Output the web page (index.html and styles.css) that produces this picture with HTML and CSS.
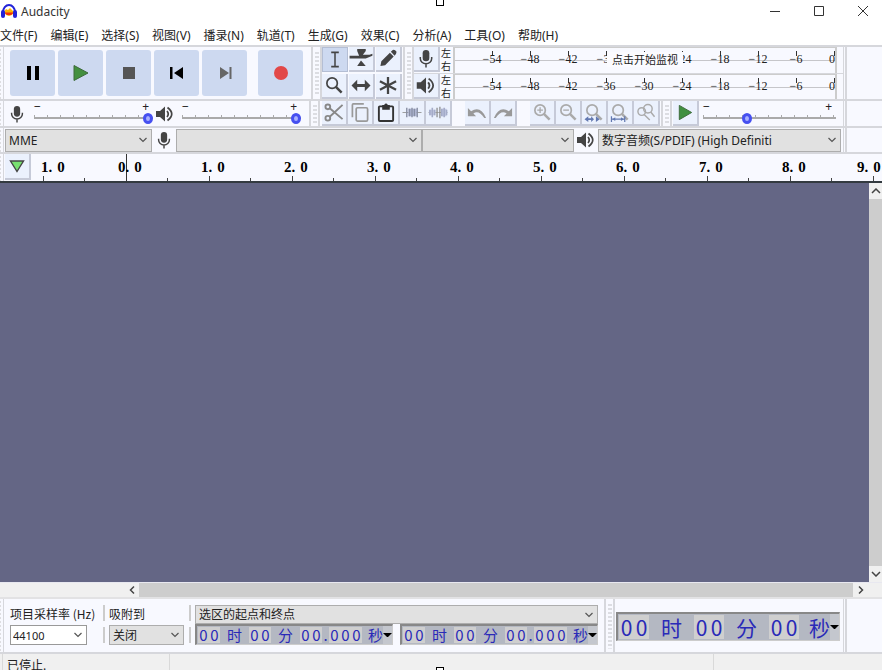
FILE: index.html
```
<!DOCTYPE html>
<html lang="zh-CN">
<head>
    <meta charset="UTF-8">
    <meta name="viewport" content="width=device-width, initial-scale=1.0">
    <title>Audacity</title>
    <link rel="stylesheet" href="styles.css">
</head>
<body>
<!-- Shared icons -->
<svg class="sprite" aria-hidden="true">
    <symbol id="mic" viewBox="0 0 18 20">
        <rect x="5.500" y="1" width="7" height="12" rx="3.500" fill="#444"/>
        <path d="M3 8.500v1.500a6 5.500 0 0 0 12 0v-1.500M9 15.500v4" fill="none" stroke="#444" stroke-width="1.600"/>
    </symbol>
    <symbol id="speaker" viewBox="0 0 18 18">
        <path d="M0 6h4l5-4.500v15L4 12H0z" fill="#444"/>
        <path d="M11 6q2.500 3 0 6M11.500 2.500q8.500 6.500 0 13" fill="none" stroke="#444" stroke-width="1.700"/>
    </symbol>
    <symbol id="lens" viewBox="0 0 20 20">
        <circle cx="8" cy="7.500" r="5.500" fill="none" stroke="currentColor" stroke-width="1.800"/>
        <path d="M12 11.500l6 6" stroke="currentColor" stroke-width="2.600"/>
    </symbol>
    <symbol id="chevron" viewBox="0 0 10 6">
        <path d="M1.500 1l3.500 3.500L8.500 1" fill="none" stroke="#555" stroke-width="1.200"/>
    </symbol>
    <symbol id="undo-arrow" viewBox="0 0 22 16">
        <path d="M1 3v9h9L7 9q6-4 12 5h2Q15 0 4.500 6.500z" fill="#999"/>
    </symbol>
</svg>

<header class="titlebar">
    <svg class="logo" viewBox="0 0 18 18">
        <path d="M3 10a6 7 0 0 1 12 0" fill="#fff" stroke="#2323d8" stroke-width="2"/>
        <path d="M4 10l2-3 2 1 2-2 2 2 2 2-2 3-3 1-3-1z" fill="#ffb400"/>
        <path d="M4 10.500h10l-3 2.500H7z" fill="#f03010"/>
        <rect x="1" y="8" width="4" height="8" rx="2" fill="#2323d8"/>
        <rect x="13" y="8" width="4" height="8" rx="2" fill="#2323d8"/>
    </svg>
    <span class="title">Audacity</span>
    <div class="window-buttons">
        <button aria-label="最小化"><svg viewBox="0 0 12 12"><path d="M1 6.500h10"/></svg></button>
        <button aria-label="最大化"><svg viewBox="0 0 12 12"><path d="M1.500 1.500h9v9h-9z"/></svg></button>
        <button aria-label="关闭"><svg viewBox="0 0 12 12"><path d="M1 1l10 10M11 1L1 11"/></svg></button>
    </div>
</header>

<nav class="menu">
    <a href="#">文件(F)</a>
    <a href="#">编辑(E)</a>
    <a href="#">选择(S)</a>
    <a href="#">视图(V)</a>
    <a href="#">播录(N)</a>
    <a href="#">轨道(T)</a>
    <a href="#">生成(G)</a>
    <a href="#">效果(C)</a>
    <a href="#">分析(A)</a>
    <a href="#">工具(O)</a>
    <a href="#">帮助(H)</a>
</nav>

<div class="dock">
    <div class="dock-row dock-main">
        <div class="edge-grip"></div>
        <div class="transport">
            <button aria-label="暂停"><svg viewBox="0 0 20 20"><path d="M4 3h4v14H4zM12 3h4v14h-4z" fill="#000"/></svg></button>
            <button aria-label="播放"><svg viewBox="0 0 20 20"><path d="M3 2.500v15l14-7.500z" fill="#43903f" stroke="#3c6a3a"/></svg></button>
            <button aria-label="停止"><svg viewBox="0 0 20 20"><path d="M4 4h12v12H4z" fill="#555"/></svg></button>
            <button aria-label="跳至开头"><svg viewBox="0 0 20 20"><path d="M3 4h2.500v12H3zM16 4v12l-9-6z" fill="#000"/></svg></button>
            <button aria-label="跳至末尾"><svg viewBox="0 0 20 20"><path d="M14.500 4h2v12h-2zM5 4v12l9-6z" fill="#666"/></svg></button>
            <button class="record" aria-label="录制"><svg viewBox="0 0 20 20"><circle cx="10" cy="10" r="7" fill="#e24848"/></svg></button>
        </div>
        <div class="grip"></div>
        <div class="tools">
            <button class="tool active" aria-label="选择工具"><svg viewBox="0 0 20 20"><path d="M6 2.500h8M6 17.500h8M10 2.500v15" fill="none" stroke="#444" stroke-width="1.600"/></svg></button>
            <button class="tool wide" aria-label="包络工具"><svg viewBox="0 0 24 20"><path d="M8 0h9v2l-3 4h7l3-1v2l-7 3H0V7h10L8 2zM12 12l5 6H8z" fill="#444"/></svg></button>
            <button class="tool" aria-label="绘制工具"><svg viewBox="0 0 20 20"><path d="M2 18l1-5L12 4l4 4-9 9zM13 3l2-2q2-1 4 2 0 2-2 4z" fill="#444"/></svg></button>
            <button class="tool" aria-label="缩放工具"><svg class="dark" viewBox="0 0 20 20"><use href="#lens"/></svg></button>
            <button class="tool" aria-label="时间移动工具"><svg viewBox="0 0 20 20"><path d="M0 10l6-6v4.500h8V4l6 6-6 6v-4.500H6V16z" fill="#444"/></svg></button>
            <button class="tool" aria-label="多功能工具"><svg viewBox="0 0 20 20"><path d="M10 1v18M1.500 5.500l17 9M1.500 14.500l17-9" stroke="#444" stroke-width="2.400"/></svg></button>
        </div>
        <div class="grip"></div>
        <div class="meters">
            <div class="meter">
                <button class="tool" aria-label="录音电平"><svg viewBox="0 0 18 20"><use href="#mic"/></svg></button>
                <div class="channels"><span>左</span><span>右</span></div>
                <div class="scale">
                    <span>−54</span><span>−48</span><span>−42</span><span>−36</span><span>−30</span><span>−24</span><span>−18</span><span>−12</span><span>−6</span><span>0</span>
                    <button class="monitor">点击开始监视</button>
                </div>
            </div>
            <div class="meter">
                <button class="tool" aria-label="播放电平"><svg viewBox="0 0 18 18"><use href="#speaker"/></svg></button>
                <div class="channels"><span>左</span><span>右</span></div>
                <div class="scale">
                    <span>−54</span><span>−48</span><span>−42</span><span>−36</span><span>−30</span><span>−24</span><span>−18</span><span>−12</span><span>−6</span><span>0</span>
                </div>
            </div>
        </div>
        <div class="dock-end"></div>
    </div>

    <div class="dock-row dock-edit">
        <div class="edge-grip"></div>
        <div class="mixer">
            <svg class="device-icon" viewBox="0 0 18 20"><use href="#mic"/></svg>
            <div class="slider">
                <div class="slider-signs"><span>−</span><span>+</span></div>
                <input type="range" aria-label="录音音量" value="100">
            </div>
            <svg class="device-icon" viewBox="0 0 18 18"><use href="#speaker"/></svg>
            <div class="slider">
                <div class="slider-signs"><span>−</span><span>+</span></div>
                <input type="range" aria-label="播放音量" value="100">
            </div>
        </div>
        <div class="grip"></div>
        <div class="edit-tools">
            <button class="tool" aria-label="剪切"><svg viewBox="0 0 20 20" fill="none" stroke="#888" stroke-width="2"><circle cx="3.500" cy="4" r="2.500"/><circle cx="3.500" cy="16" r="2.500"/><path d="M5.500 5.500L19 17M5.500 14.500L19 2"/></svg></button>
            <button class="tool" aria-label="复制"><svg viewBox="0 0 20 20" fill="none" stroke="#999" stroke-width="1.800"><rect x="6" y="5" width="12" height="14" rx="1.500"/><path d="M2 15V2q0-1 1-1h11"/></svg></button>
            <button class="tool" aria-label="粘贴"><svg viewBox="0 0 20 20"><rect x="2.500" y="3.500" width="15" height="15.500" rx="1" fill="none" stroke="#333" stroke-width="2"/><path d="M6 2h2q2-3 4 0h2v5H6z" fill="#333"/></svg></button>
            <button class="tool" aria-label="修剪"><svg viewBox="0 0 20 20"><path d="M0 10h20" stroke="#999"/><path d="M6 6h9v8H6z" fill="#b4bbd8"/><path d="M4.500 5v10M7.500 6v8M10 5v10M12.500 6v8M15.500 5v10" stroke="#888fa4" stroke-width="1.500"/></svg></button>
            <button class="tool" aria-label="静音"><svg viewBox="0 0 20 20"><path d="M0 10h20" stroke="#aaa"/><path d="M1 7h6v6H1zM14 6h5v8h-5z" fill="#c2c8e0"/><path d="M1.500 7v6M4 5v10M6.500 7v6M14 6v8M16.500 5v10M19 7v6" stroke="#a4abc8" stroke-width="1.700"/><path d="M9 5v10M12 4v12" stroke="#888" stroke-width="1.300"/></svg></button>
            <button class="tool gap" aria-label="撤销"><svg viewBox="0 0 22 16"><use href="#undo-arrow"/></svg></button>
            <button class="tool" aria-label="重做"><svg class="flip" viewBox="0 0 22 16"><use href="#undo-arrow"/></svg></button>
            <button class="tool gap" aria-label="放大"><svg viewBox="0 0 20 20"><use href="#lens"/><path d="M5 7.500h6M8 4.500v6" stroke="#aaa" stroke-width="1.400"/></svg></button>
            <button class="tool" aria-label="缩小"><svg viewBox="0 0 20 20"><use href="#lens"/><path d="M5 7.500h6" stroke="#aaa" stroke-width="1.400"/></svg></button>
            <button class="tool" aria-label="适应选区"><svg viewBox="0 0 20 20"><use href="#lens"/><path d="M0 17l4-3v2h3v-2l3 3-3 3v-2H4v2zM16 17l-4-3v6z" fill="#6278b0"/></svg></button>
            <button class="tool" aria-label="适应项目"><svg viewBox="0 0 20 20"><use href="#lens"/><path d="M1 14v6M15 14v6M1 17h14" stroke="#6278b0" stroke-width="1.300"/><path d="M2 17l3-2v4zM14 17l-3-2v4z" fill="#6278b0"/></svg></button>
            <button class="tool" aria-label="缩放切换"><svg viewBox="0 0 20 20" fill="none" stroke="#aaa" stroke-width="1.500"><circle cx="5.500" cy="9" r="4"/><circle cx="12" cy="6" r="4.500"/><path d="M15 9.500l4 5M8 12l6 6"/></svg></button>
        </div>
        <div class="grip"></div>
        <div class="play-speed">
            <button class="tool" aria-label="以指定速度播放"><svg viewBox="0 0 20 20"><path d="M4 2.500v15l13-7.500z" fill="#3f9040" stroke="#3c6a3a"/></svg></button>
            <div class="slider">
                <div class="slider-signs"><span>−</span><span>+</span></div>
                <input type="range" aria-label="播放速度" value="32">
            </div>
        </div>
        <div class="dock-end"></div>
    </div>

    <div class="dock-row dock-device">
        <div class="edge-grip"></div>
        <div class="devices">
            <div class="select host">
                <select aria-label="音频主机"><option>MME</option></select>
                <svg><use href="#chevron"/></svg>
            </div>
            <svg class="device-icon" viewBox="0 0 18 20"><use href="#mic"/></svg>
            <div class="select input-device">
                <select aria-label="录音设备"></select>
                <svg><use href="#chevron"/></svg>
            </div>
            <div class="select input-channels">
                <select aria-label="录音声道"></select>
                <svg><use href="#chevron"/></svg>
            </div>
            <svg class="device-icon" viewBox="0 0 18 18"><use href="#speaker"/></svg>
            <div class="select output-device">
                <select aria-label="播放设备"><option>数字音频(S/PDIF) (High Definiti</option></select>
                <svg><use href="#chevron"/></svg>
            </div>
        </div>
        <div class="dock-end"></div>
    </div>
</div>

<div class="ruler">
    <div class="edge-grip"></div>
    <button class="tool pin" aria-label="播放头"><svg viewBox="0 0 16 14"><path d="M1.500 2h13L8 12.500z" fill="#78e070" stroke="#444" stroke-width="1.400"/></svg></button>
    <div class="marks">
        <div class="mark negative">1.<span>0</span></div>
        <div class="mark origin">0.<span>0</span></div>
        <div class="mark">1.<span>0</span></div>
        <div class="mark">2.<span>0</span></div>
        <div class="mark">3.<span>0</span></div>
        <div class="mark">4.<span>0</span></div>
        <div class="mark">5.<span>0</span></div>
        <div class="mark">6.<span>0</span></div>
        <div class="mark">7.<span>0</span></div>
        <div class="mark">8.<span>0</span></div>
        <div class="mark last">9.<span>0</span></div>
    </div>
</div>

<main class="workspace">
    <div class="tracks"></div>
    <div class="vscroll">
        <button aria-label="向上滚动"><svg class="up" viewBox="0 0 10 6"><path d="M1 1l4 4 4-4"/></svg></button>
        <div class="thumb"></div>
        <button aria-label="向下滚动"><svg viewBox="0 0 10 6"><path d="M1 1l4 4 4-4"/></svg></button>
    </div>
</main>
<div class="hscroll">
    <button aria-label="向左滚动"><svg viewBox="0 0 6 10"><path d="M5 1.500L1.500 5 5 8.500"/></svg></button>
    <div class="thumb"></div>
    <button aria-label="向右滚动"><svg viewBox="0 0 6 10"><path d="M1 1.500L4.500 5 1 8.500"/></svg></button>
</div>

<section class="selection-bar">
    <div class="edge-grip"></div>
    <div class="selection">
        <div class="field rate">
            <label for="rate">项目采样率 (Hz)</label>
            <div class="select light">
                <select id="rate"><option>44100</option></select>
                <svg><use href="#chevron"/></svg>
            </div>
        </div>
        <div class="divider"><i></i><i></i></div>
        <div class="field snap">
            <label for="snap">吸附到</label>
            <div class="select">
                <select id="snap"><option>关闭</option></select>
                <svg><use href="#chevron"/></svg>
            </div>
        </div>
        <div class="divider"><i></i><i></i></div>
        <div class="range">
            <div class="select">
                <select aria-label="选区"><option>选区的起点和终点</option></select>
                <svg><use href="#chevron"/></svg>
            </div>
            <div class="times">
                <div class="time">
                    <span class="digits"><b>0</b><b>0</b></span><span class="unit">时</span><span class="digits"><b>0</b><b>0</b></span><span class="unit">分</span><span class="digits"><b>0</b><b>0</b></span><span class="point">.</span><span class="digits"><b>0</b><b>0</b><b>0</b></span><span class="unit">秒</span>
                    <button aria-label="时间格式"></button>
                </div>
                <div class="time">
                    <span class="digits"><b>0</b><b>0</b></span><span class="unit">时</span><span class="digits"><b>0</b><b>0</b></span><span class="unit">分</span><span class="digits"><b>0</b><b>0</b></span><span class="point">.</span><span class="digits"><b>0</b><b>0</b><b>0</b></span><span class="unit">秒</span>
                    <button aria-label="时间格式"></button>
                </div>
            </div>
        </div>
    </div>
    <div class="grip"></div>
    <div class="position">
        <div class="time big">
            <span class="digits"><b>0</b><b>0</b></span><span class="unit">时</span><span class="digits"><b>0</b><b>0</b></span><span class="unit">分</span><span class="digits"><b>0</b><b>0</b></span><span class="unit">秒</span>
            <button aria-label="时间格式"></button>
        </div>
    </div>
    <div class="dock-end"></div>
</section>

<footer class="status">
    <span class="state">已停止.</span>
    <span class="message"></span>
    <span class="actual-rate"></span>
</footer>

<div class="handle handle-top"></div>
<div class="handle handle-bottom"></div>
</body>
</html>
```

FILE: styles.css
```
* {
    box-sizing: border-box;
}

body {
    --panel: #f8f9ff;
    --line: #d6d7dc;
    --button: #ebf1fd;
    position: relative;
    display: flex;
    flex-direction: column;
    height: 100vh;
    margin: 0;
    overflow: hidden;
    background: #fff;
    color: #222;
    font-family: "Noto Sans", "Noto Sans CJK SC", sans-serif;
    font-size: 12px;
}

button, select, input {
    margin: 0;
    padding: 0;
    border: none;
    background: none;
    color: inherit;
    font: inherit;
}

svg {
    display: block;
    flex: none;
}

.sprite {
    position: absolute;
    width: 0;
    height: 0;
}

/* Title and menu */
.titlebar {
    display: flex;
    align-items: center;
    height: 22px;
    flex: none;
}

.logo {
    width: 18px;
    height: 18px;
}

.title {
    margin-left: 3px;
    color: #333;
}

.window-buttons {
    display: flex;
    gap: 32px;
    margin-left: auto;
    padding-right: 13px;
}

.window-buttons svg {
    width: 12px;
    height: 12px;
    fill: none;
    stroke: #333;
}

.menu {
    display: flex;
    align-items: center;
    gap: 13px;
    height: 23px;
    padding-top: 2px;
    flex: none;
}

.menu a {
    color: #222;
    text-decoration: none;
    white-space: nowrap;
}

/* Toolbars */
.dock {
    border-top: 2px solid var(--line);
    background: var(--panel);
    flex: none;
}

.dock-row {
    display: flex;
    border-bottom: 2px solid var(--line);
}

.dock-main {
    height: 54px;
}

.dock-edit {
    height: 27px;
}

.dock-device {
    height: 26px;
}

.edge-grip {
    width: 4px;
    border-right: 1px solid var(--line);
    background: repeating-linear-gradient(#f8f9ff 0 2px, #dddde0 2px 4px) 0 0 / 1px 100% no-repeat;
    flex: none;
}

.grip {
    width: 11px;
    border-left: 2px solid var(--line);
    border-right: 2px solid var(--line);
    background: repeating-linear-gradient(transparent 0 2px, #dcdde2 2px 4px) center / 4px 88% no-repeat;
    flex: none;
}

.dock-end {
    width: 4px;
    border-left: 1px solid var(--line);
    border-right: 2px solid var(--line);
    flex: none;
}

.transport {
    display: flex;
    align-items: center;
    gap: 3px;
    width: 307px;
    padding-left: 6px;
}

.transport button {
    display: grid;
    place-items: center;
    width: 45px;
    height: 46px;
    border-radius: 3px;
    background: #cdd9f0;
}

.transport .record {
    margin-left: 8px;
}

.transport svg {
    width: 20px;
    height: 20px;
}

.tool {
    display: grid;
    place-items: center;
    width: 26px;
    height: 25px;
    border-right: 2px solid #c6cad8;
    border-bottom: 2px solid #c6cad8;
    background: var(--button);
    flex: none;
}

.tool svg {
    width: 20px;
    height: 19px;
    color: #aaa;
}

.tool.wide svg {
    width: 24px;
}

.tool svg.dark {
    color: #444;
}

.tool svg.flip {
    transform: scaleX(-1);
}

.tool.active {
    border: 1px solid #b4bed4;
    background: #cdd9f0;
}

.tools {
    display: grid;
    grid-template-columns: repeat(3, 26px);
    gap: 2px 1px;
    width: 81px;
}

.meters {
    display: grid;
    grid-template-rows: 26px 26px;
    width: 429px;
}

.meter {
    display: flex;
}

.meter + .meter {
    border-top: 1px solid var(--line);
}

.channels {
    display: flex;
    flex-direction: column;
    width: 13px;
    padding-left: 1px;
    font-size: 10px;
    line-height: 13px;
}

.scale {
    position: relative;
    display: flex;
    flex: 1;
    margin-right: 6px;
    padding-left: 18px;
    border-top: 1px solid #ccc;
    border-left: 2px solid #ccc;
    border-right: 2px solid #ccc;
    background: linear-gradient(#c6c6ca, #c6c6ca) 0 12px / 100% 1px no-repeat;
    font-family: "Liberation Serif", serif;
    line-height: 22px;
}

.scale span {
    flex: 0 0 38px;
    background: linear-gradient(#333, #333) center 3px / 1px 5px no-repeat;
    text-align: center;
}

.scale span:nth-child(10) {
    flex: 1;
    background-position: right 3px;
    text-align: right;
}

.monitor {
    position: absolute;
    left: 152px;
    top: 4px;
    width: 76px;
    height: 15px;
    background: #fbfbff;
    font-family: "Noto Sans CJK SC", sans-serif;
    font-size: 11px;
    line-height: 15px;
    white-space: nowrap;
}

.mixer {
    display: flex;
    align-items: center;
    gap: 3px;
    width: 305px;
    padding-left: 4px;
}

.mixer .device-icon {
    margin-right: 5px;
}

.device-icon {
    width: 18px;
    height: 18px;
}

.slider {
    width: 119px;
}

.slider-signs {
    display: flex;
    justify-content: space-between;
    height: 9px;
    padding-right: 4px;
    line-height: 8px;
}

.slider input {
    display: block;
    width: 100%;
    height: 12px;
    appearance: none;
    background:
        linear-gradient(#aaa, #aaa) 0 5px / 100% 2px no-repeat,
        repeating-linear-gradient(90deg, #aaa 0 1px, transparent 1px 13px) 0 3px / 100% 3px no-repeat;
}

.slider input::-webkit-slider-thumb {
    width: 10px;
    height: 11px;
    border: 3px solid #4650f0;
    border-radius: 50%;
    appearance: none;
    background: #a9b0ff;
}

.edit-tools {
    display: flex;
    width: 341px;
    padding-left: 2px;
}

.edit-tools .gap {
    margin-left: 13px;
}

.play-speed {
    display: flex;
    align-items: center;
    gap: 4px;
    width: 171px;
    padding-left: 1px;
}

.play-speed .slider {
    width: 133px;
}

.select {
    display: grid;
    align-items: center;
    height: 23px;
    border: 1px solid #adadad;
    background: #e1e1e1;
}

.select select {
    grid-area: 1 / 1;
    width: 100%;
    height: 100%;
    padding: 0 14px 0 3px;
    appearance: none;
}

.select svg {
    grid-area: 1 / 1;
    justify-self: end;
    width: 10px;
    height: 6px;
    margin-right: 3px;
    pointer-events: none;
}

.devices {
    display: flex;
    align-items: center;
    width: 839px;
    padding: 0 2px 0 1px;
}

.devices .device-icon {
    margin: 0 3px;
}

.host {
    width: 147px;
}

.input-device {
    width: 246px;
}

.input-channels {
    width: 152px;
}

.output-device {
    flex: 1;
}

/* Timeline */
.ruler {
    display: flex;
    height: 29px;
    border-bottom: 2px solid #333a40;
    background: var(--panel);
    flex: none;
}

.pin {
    height: 26px;
    margin-left: 1px;
}

.pin svg {
    width: 16px;
    height: 14px;
}

.marks {
    display: flex;
    flex: 1;
    margin-left: 4px;
    overflow: hidden;
}

.mark {
    flex: 0 0 83px;
    background:
        linear-gradient(#444, #444) 8px 100% / 1px 5px no-repeat,
        linear-gradient(#444, #444) 49px 100% / 1px 3px no-repeat;
    color: #000;
    font-family: "Liberation Serif", serif;
    font-size: 15px;
    font-weight: bold;
    line-height: 26px;
}

.mark span {
    margin-left: 5px;
}

.negative {
    padding-left: 6px;
}

.origin {
    background:
        linear-gradient(#333, #333) 8px 0 / 1px 100% no-repeat,
        linear-gradient(#444, #444) 49px 100% / 1px 3px no-repeat;
}

.last {
    margin-left: -8px;
    background: linear-gradient(#444, #444) 16px 100% / 1px 5px no-repeat;
}

/* Track area */
.workspace {
    display: flex;
    flex: 1;
    min-height: 0;
}

.tracks {
    flex: 1;
    background: #646685;
}

.vscroll {
    display: flex;
    flex-direction: column;
    width: 13px;
    background: #f0f0f0;
}

.vscroll button {
    display: grid;
    place-items: center;
    height: 16px;
    width: 100%;
}

.vscroll svg {
    width: 10px;
    height: 6px;
}

.vscroll svg, .hscroll svg {
    fill: none;
    stroke: #444;
    stroke-width: 1.5;
}

.vscroll .up {
    transform: rotate(180deg);
}

.thumb {
    flex: 1;
    background: #cdcdcd;
}

.hscroll {
    display: flex;
    height: 17px;
    padding: 0 14px 0 124px;
    border-top: 1px solid #e8e8f0;
    border-bottom: 2px solid #e2e2e4;
    background: #f0f0f0;
    flex: none;
}

.hscroll button {
    display: grid;
    place-items: center;
    width: 15px;
}

.hscroll svg {
    width: 6px;
    height: 10px;
}

/* Selection toolbar */
.selection-bar {
    display: flex;
    height: 55px;
    border-bottom: 2px solid var(--line);
    background: var(--panel);
    flex: none;
}

.selection {
    display: flex;
    width: 600px;
    padding: 6px 6px 7px 6px;
    flex: none;
}

.field {
    display: flex;
    flex-direction: column;
    justify-content: space-between;
    flex: none;
    white-space: nowrap;
}

.field label {
    font-family: "Noto Sans CJK SC", sans-serif;
    line-height: 18px;
}

.field .select {
    height: 20px;
}

.rate {
    width: 88px;
}

.rate .select {
    width: 77px;
}

.rate select {
    padding-left: 2px;
    font-size: 11px;
}

.snap {
    width: 75px;
}

.light {
    background: #fff;
    border-color: #999;
}

.divider {
    display: flex;
    flex-direction: column;
    justify-content: space-between;
    margin: 0 4px 2px 5px;
}

.divider i {
    width: 2px;
    height: 16px;
    background: #ccc;
}

.range {
    display: flex;
    flex-direction: column;
    justify-content: space-between;
    flex: 1;
    min-width: 0;
}

.range .select {
    height: 19px;
}

.times {
    display: flex;
    gap: 7px;
}

.time {
    display: flex;
    align-items: center;
    flex: 1;
    min-width: 0;
    height: 21px;
    padding-left: 1px;
    border: 1px solid #ccc;
    border-top: 2px solid #888;
    border-left: 2px solid #888;
    background: #b4b8c2;
    color: #2a2ab8;
    font-family: "Noto Sans CJK SC", sans-serif;
    font-size: 15px;
    line-height: 16px;
}

.digits {
    display: flex;
    flex: none;
    background: #cfcfcf;
}

.digits b {
    width: 11px;
    font-weight: normal;
    text-align: center;
}

.unit {
    width: 29px;
    flex: none;
    text-align: center;
}

.point {
    width: 7px;
    flex: none;
    text-align: center;
}

.time .unit:nth-last-child(2) {
    flex: 1;
    text-align: right;
}

.time button {
    align-self: stretch;
    width: 9px;
    flex: none;
    background: #c4c7ce;
}

.time button::before {
    content: "";
    display: block;
    border: 4px solid transparent;
    border-top-color: #000;
    border-bottom: none;
}

.position {
    display: flex;
    align-items: center;
    width: 228px;
    padding: 2px 3px 0 1px;
    flex: none;
}

.big {
    height: 29px;
    font-size: 21px;
    line-height: 24px;
}

.big .digits b {
    width: 15px;
}

.big .unit {
    width: 45px;
}

/* Status bar */
.status {
    display: flex;
    height: 16px;
    padding-left: 2px;
    background: #f0f0f0;
    flex: none;
}

.status span {
    border-left: 1px solid #d9d9d9;
}

.state {
    width: 167px;
    padding-left: 4px;
    line-height: 24px;
}

.message {
    flex: 1;
}

.actual-rate {
    width: 169px;
}

/* Window resize handles */
.handle {
    position: absolute;
    left: 436px;
    width: 8px;
    height: 8px;
    border: 1px solid #000;
    background: #fff;
}

.handle-top {
    top: -2px;
}

.handle-bottom {
    bottom: -5px;
}
```
